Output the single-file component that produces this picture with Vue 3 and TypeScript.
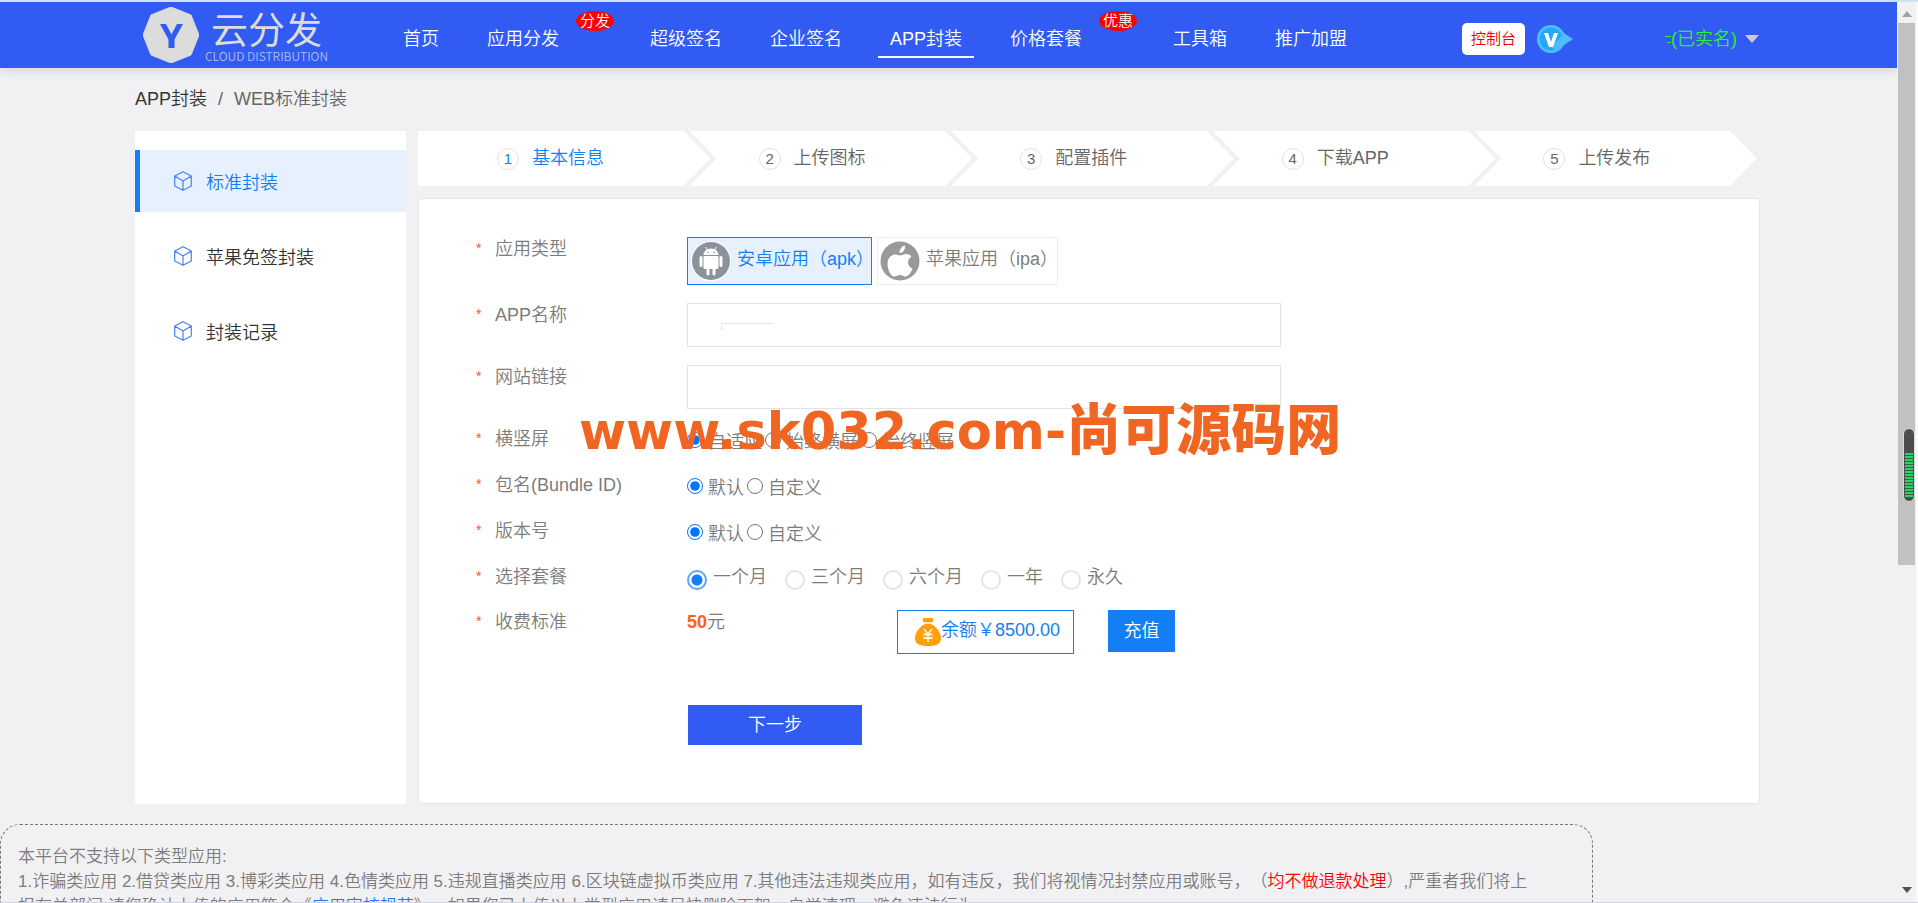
<script setup lang="ts">
import { ref } from 'vue'

interface NavItem { label: string; badge?: string; active?: boolean }
interface RadioRow { name: string; label: string; options: string[] }

const navItems: NavItem[] = [
  { label: '首页' },
  { label: '应用分发', badge: '分发' },
  { label: '超级签名' },
  { label: '企业签名' },
  { label: 'APP封装', active: true },
  { label: '价格套餐', badge: '优惠' },
  { label: '工具箱' },
  { label: '推广加盟' },
]
const sideItems = ['标准封装', '苹果免签封装', '封装记录']
const steps = ['基本信息', '上传图标', '配置插件', '下载APP', '上传发布']
const radioRows: RadioRow[] = [
  { name: 'orientation', label: '横竖屏', options: ['自适应', '始终横屏', '始终竖屏'] },
  { name: 'bundle', label: '包名(Bundle ID)', options: ['默认', '自定义'] },
  { name: 'version', label: '版本号', options: ['默认', '自定义'] },
]
const plans = ['一个月', '三个月', '六个月', '一年', '永久']

const platform = ref('apk')
const appName = ref('')
const siteUrl = ref('')
const picked = ref<Record<string, string>>({ orientation: '自适应', bundle: '默认', version: '默认' })
const plan = ref('一个月')
</script>

<template>
  <div class="window">
    <div class="page">
      <header class="header">
        <a class="logo" href="#" aria-label="云分发">
          <svg class="logo-mark" viewBox="0 0 56 56" aria-hidden="true">
            <path d="M28 0 48 8 56 28 48 48 28 56 8 48 0 28 8 8Z" fill="#dcdcdc" stroke="#dcdcdc" stroke-linejoin="round" />
            <path d="M17 17h6l5.500 10.500L34 17h6l-8.500 15.500V41h-6v-8.500Z" fill="#315bf3" />
          </svg>
          <span class="logo-text">
            <b>云分发</b>
            <small>CLOUD DISTRIBUTION</small>
          </span>
        </a>
        <nav class="nav">
          <div v-for="item in navItems" :key="item.label" class="nav-item">
            <a href="#" :class="{ active: item.active }">{{ item.label }}</a>
            <span v-if="item.badge" class="badge">{{ item.badge }}</span>
          </div>
        </nav>
        <div class="account">
          <button class="console" type="button">控制台</button>
          <svg class="vip" viewBox="0 0 36 28" aria-hidden="true">
            <path d="M24 6 36 14 24 22Z" fill="#4dbdff" />
            <circle cx="14" cy="14" r="14" fill="#56bdfc" />
            <circle cx="14" cy="14" r="11.500" fill="#20aaff" />
            <path d="M14 22 27 9v10l-7 7Z" fill="#4dbdff" />
            <path d="M7 8h4l3 9 3-9h4l-5 14h-4Z" fill="#fff" />
          </svg>
          <a class="user" href="#">
            <svg class="dashes" viewBox="0 0 8 18" aria-hidden="true">
              <path d="M2 6.500h6M4 12.500h4" stroke="#2cf03a" />
            </svg>
            <span>(已实名)</span>
            <svg class="caret" viewBox="0 0 14 8" aria-hidden="true"><path d="M0 0h14L7 8Z" fill="#c9ccd6" /></svg>
          </a>
        </div>
      </header>

      <nav class="crumbs" aria-label="breadcrumb">
        <a href="#">APP封装</a><span>/</span><span>WEB标准封装</span>
      </nav>

      <div class="columns">
        <aside class="sidebar">
          <a v-for="(item, i) in sideItems" :key="item" href="#" class="side-item" :class="{ active: i === 0 }">
            <svg viewBox="0 0 18 20" aria-hidden="true">
              <path d="M9 .7 17.300 5v10L9 19.300.7 15V5ZM.7 5 9 10l8.300-5M9 10v9.300" fill="none" stroke="#4a80f5" stroke-width="1.200" stroke-linejoin="round" />
            </svg>
            <span>{{ item }}</span>
          </a>
        </aside>

        <main class="main">
          <ol class="steps">
            <li v-for="(step, i) in steps" :key="step" class="step" :class="{ current: i === 0 }">
              <i>{{ i + 1 }}</i><span>{{ step }}</span>
            </li>
          </ol>

          <form class="form" @submit.prevent>
            <div class="row">
              <span class="label">应用类型</span>
              <div class="platforms">
                <button type="button" class="platform" :class="{ on: platform === 'apk' }" @click="platform = 'apk'">
                  <svg viewBox="0 0 40 40" aria-hidden="true">
                    <circle cx="20" cy="20" r="20" fill="#fff" />
                    <circle cx="20" cy="20" r="19" fill="#8b929b" />
                    <path d="M12.500 14a7.500 6.500 0 0 1 15 0Z" fill="#fff" />
                    <path d="m14.500 6 2 3m9-3-2 3" stroke="#fff" />
                    <path d="M12.500 15h15v11.500a1.500 1.500 0 0 1-1.500 1.500H14a1.500 1.500 0 0 1-1.500-1.500Z" fill="#fff" />
                    <path d="M10 16.500v8M30 16.500v8M17 27v6M23 27v6" stroke="#fff" stroke-width="3" stroke-linecap="round" />
                    <circle cx="17" cy="11.500" r=".8" fill="#8b929b" /><circle cx="23" cy="11.500" r=".8" fill="#8b929b" />
                  </svg>
                  <span>安卓应用（apk）</span>
                </button>
                <button type="button" class="platform ipa" :class="{ on: platform === 'ipa' }" @click="platform = 'ipa'">
                  <svg viewBox="0 0 40 40" aria-hidden="true">
                    <circle cx="20" cy="20" r="19.500" fill="#999" />
                    <path d="M20 14.500c2 0 3.500-1.500 6.500-1.500 2 0 4 1 5 2.500-5 3.500-4.500 9.500 1 12-1.500 4-4 8-7 8-2.500 0-3-1.500-5.500-1.500s-3.500 1.500-6 1.500C10.500 35.500 7.500 28 7.500 23c0-6 4-9.500 7.500-9.500 2.500 0 3.500 1 5 1Z" fill="#fff" />
                    <path d="M19.500 12c0-4 2.500-7 5.500-7.500.5 4-2 7.500-5.500 7.500Z" fill="#fff" />
                  </svg>
                  <span>苹果应用（ipa）</span>
                </button>
              </div>
            </div>

            <div class="row">
              <label class="label" for="app-name">APP名称</label>
              <div class="field">
                <input id="app-name" v-model="appName" type="text">
                <svg class="trace" viewBox="0 0 52 8" aria-hidden="true"><path d="M.5 7V.5H52" fill="none" stroke="#e2e2e2" /></svg>
              </div>
            </div>

            <div class="row">
              <label class="label" for="site-url">网站链接</label>
              <div class="field"><input id="site-url" v-model="siteUrl" type="text"></div>
            </div>

            <div v-for="row in radioRows" :key="row.name" class="row radio-row">
              <span class="label">{{ row.label }}</span>
              <div class="radios">
                <label v-for="option in row.options" :key="option">
                  <input v-model="picked[row.name]" type="radio" :name="row.name" :value="option"><span>{{ option }}</span>
                </label>
              </div>
            </div>

            <div class="row plan-row">
              <span class="label">选择套餐</span>
              <div class="plans">
                <label v-for="option in plans" :key="option">
                  <input v-model="plan" type="radio" name="plan" :value="option"><span>{{ option }}</span>
                </label>
              </div>
            </div>

            <div class="row">
              <span class="label">收费标准</span>
              <div class="billing">
                <span class="price"><b>50</b>元</span>
                <div class="balance">
                  <svg viewBox="0 0 26 28" aria-hidden="true">
                    <path d="M8 0h10v4l-2 2c6 3 10 9 10 14 0 6-4 8-13 8S0 26 0 20C0 15 4 9 10 6L8 4Z" fill="#ffa008" />
                    <path d="M7 5h12" stroke="#fff" stroke-width="1.500" />
                    <path d="m9 11 4 5 4-5M13 16v8M8.500 16.500h9M8.500 20h9" fill="none" stroke="#fff0dc" stroke-width="1.800" />
                  </svg>
                  <span>余额￥8500.00</span>
                </div>
                <button class="recharge" type="button">充值</button>
              </div>
            </div>

            <button class="next" type="submit">下一步</button>
            <div class="watermark"><span>www.sk032.com-</span><b>尚可源码网</b></div>
          </form>
        </main>
      </div>

      <section class="notice">
        <p>本平台不支持以下类型应用:</p>
        <p>
          1.诈骗类应用 2.借贷类应用 3.博彩类应用 4.色情类应用 5.违规直播类应用 6.区块链虚拟币类应用 7.其他违法违规类应用，如有违反，我们将视情况封禁应用或账号，（<em>均不做退款处理</em>）,严重者我们将上<br>报有关部门,请您确认上传的应用符合《<a href="#">应用审核规范</a>》，如果您已上传以上类型应用请尽快删除下架，自觉清理，避免违法行为
        </p>
      </section>
    </div>

    <div class="scrollbar" aria-hidden="true">
      <svg class="arrow" viewBox="0 0 10 6"><path d="M0 6 5 0l5 6Z" fill="#a3a3a3" /></svg>
      <div class="thumb">
        <div class="meter"><div class="level"></div></div>
      </div>
      <svg class="arrow down" viewBox="0 0 10 6"><path d="M0 0h10L5 6Z" fill="#505050" /></svg>
    </div>
  </div>
</template>

<style>
body { margin: 0; overflow: hidden; }
</style>

<style scoped>
* { box-sizing: border-box; }
.window {
  display: grid;
  grid-template-columns: minmax(0, 1fr) 21px;
  height: 100vh;
  overflow: hidden;
  border-top: 2px solid #cbe3f8;
  border-bottom: 1px solid #d5d3e4;
  background: #f1f1f3;
  color: #7c7c7c;
  font: 350 18px/24px "Liberation Sans", "Noto Sans CJK SC", sans-serif;
  text-spacing-trim: space-all;
}
a { color: inherit; text-decoration: none; }
button, input { margin: 0; font: inherit; color: inherit; }
svg { display: block; flex: none; }
.page { min-height: 0; overflow: hidden; }

.header {
  display: flex;
  align-items: center;
  height: 66px;
  padding: 0 138px 0 143px;
  background: #315bf3;
  color: #fff;
  box-shadow: 0 2px 10px rgba(0, 0, 0, .12);
}
.logo { display: flex; align-items: center; gap: 6px; width: 236px; color: #dcdcdc; }
.logo-mark { width: 56px; height: 56px; }
.logo-text { display: flex; flex-direction: column; align-items: center; font-family: "Noto Sans CJK SC", sans-serif; }
.logo-text b { font-size: 37px; line-height: 42px; font-weight: 400; }
.logo-text small { font-size: 12px; line-height: 14px; color: #adbaf0; white-space: nowrap; }
.nav { display: flex; gap: 24px; padding: 8px 0 0 12px; white-space: nowrap; }
.nav-item { display: flex; }
.nav-item a { padding: 7px 12px 5px; border-bottom: 2px solid transparent; }
.nav-item a.active { border-color: #fff; }
.badge {
  width: 38px;
  height: 20px;
  margin: -9px 0 0 5px;
  border-radius: 50%;
  background: #f00;
  font-size: 15px;
  line-height: 20px;
  text-align: center;
}
.account { display: flex; align-items: center; margin-left: auto; padding-top: 8px; white-space: nowrap; }
.console {
  width: 63px;
  height: 32px;
  padding: 0;
  border: 0;
  border-radius: 5px;
  background: #fff;
  color: #e60000;
  font-size: 15px;
}
.vip { width: 36px; height: 28px; margin: 0 90px 0 12px; }
.user { display: flex; align-items: center; color: #2cf03a; }
.dashes { width: 8px; height: 18px; }
.caret { width: 14px; height: 8px; margin-left: 8px; }

.crumbs { display: flex; gap: 11px; padding: 19px 135px 20px; }
.crumbs a { color: #333; }
.crumbs span { color: #666; }

.columns { display: grid; grid-template-columns: 271px minmax(0, 1fr); gap: 12px; padding: 0 137px 0 135px; }
.sidebar { display: flex; flex-direction: column; gap: 13px; padding: 19px 0; background: #fff; color: #333; }
.side-item {
  display: flex;
  align-items: center;
  gap: 14px;
  height: 62px;
  padding-left: 34px;
  border-left: 5px solid transparent;
}
.side-item svg { width: 18px; height: 20px; }
.side-item span { padding-top: 4px; }
.side-item.active { border-color: #147ef5; background: #e7f1fd; color: #147ef5; }

.steps { display: flex; margin: 0 3px 12px 0; padding: 0; list-style: none; }
.step {
  display: flex;
  align-items: center;
  gap: 13px;
  flex: 1 1 0;
  height: 55px;
  margin-left: -21px;
  padding-left: 69px;
  background: #fff;
  color: #666;
  clip-path: polygon(0 0, calc(100% - 27px) 0, 100% 50%, calc(100% - 27px) 100%, 0 100%, 27px 50%);
}
.step:first-child {
  flex-basis: 10px;
  margin-left: 0;
  padding-left: 79px;
  clip-path: polygon(0 0, calc(100% - 27px) 0, 100% 50%, calc(100% - 27px) 100%, 0 100%);
}
.step i {
  width: 22px;
  height: 22px;
  border: 1px solid #e2e2e2;
  border-radius: 50%;
  font-size: 15px;
  font-style: normal;
  line-height: 20px;
  text-align: center;
}
.step span { padding-bottom: 1px; }
.step.current { color: #147ef5; }

.form {
  position: relative;
  display: flex;
  flex-direction: column;
  gap: 18px;
  padding: 38px 54px 58px 57px;
  border: 1px solid #e4e5e8;
  border-radius: 4px;
  background: #fff;
}
.row { display: grid; grid-template-columns: 211px minmax(0, 1fr); }
.label { display: flex; height: 24px; }
.label::before { content: "*"; width: 19px; color: #ff4b3a; font-size: 14px; line-height: 22px; }
.platforms { display: flex; gap: 5px; }
.platform {
  display: flex;
  align-items: center;
  gap: 6px;
  width: 185px;
  height: 48px;
  padding: 0 0 0 3px;
  border: 1px solid #e7f1fd;
  background: #fff;
  white-space: nowrap;
}
.platform.ipa { width: 181px; padding-left: 2px; }
.platform.on { border-color: #147ef5; background: #e7f1fd; color: #147ef5; }
.platform svg { width: 40px; height: 40px; }
.platform span { padding-bottom: 4px; }
.field { position: relative; max-width: 594px; }
.field input { display: block; width: 100%; height: 44px; padding: 0 12px; border: 1px solid #e2e2e2; background: #fff; outline: 0; }
.trace { position: absolute; left: 34px; top: 20px; width: 52px; height: 8px; }

.radio-row { height: 28px; }
.radios { display: flex; gap: 3px; }
.radios label { display: flex; align-items: flex-start; gap: 5px; }
.radios input { width: 16px; height: 16px; margin-top: 5px; }
.radios span { padding-top: 3px; }
.plan-row { height: 27px; }
.plans { display: flex; gap: 18px; }
.plans label { display: flex; gap: 6px; }
.plans input {
  appearance: none;
  width: 20px;
  height: 20px;
  margin-top: 5px;
  border: 2px solid #e4e4e4;
  border-radius: 50%;
  background: #fff;
}
.plans input:checked { border-color: #5ba4f5; background: radial-gradient(circle, #147ef5 5px, #fff 6px); }
.billing { display: flex; align-items: flex-start; }
.price { width: 210px; }
.price b { color: #ff5f1a; font-weight: 700; }
.balance {
  display: flex;
  align-items: center;
  justify-content: center;
  width: 177px;
  height: 44px;
  margin-right: 34px;
  padding-left: 4px;
  border: 1px solid #147ef5;
  color: #147ef5;
  white-space: nowrap;
}
.balance svg { width: 26px; height: 28px; }
.balance span { padding-bottom: 4px; }
.recharge { width: 67px; height: 42px; padding: 0; border: 0; background: #147ef5; color: #fff; }
.next { width: 174px; height: 40px; margin: 33px 0 0 212px; padding: 0; border: 0; background: #315bf3; color: #fff; }
.watermark {
  position: absolute;
  left: 160px;
  top: 192px;
  color: #f16522;
  font: 700 51px/68px "DejaVu Sans", sans-serif;
  white-space: nowrap;
  pointer-events: none;
}
.watermark b { font: 900 55px/68px "Noto Sans CJK SC", sans-serif; }

.notice {
  width: 84%;
  margin-top: 20px;
  padding: 19px 17px;
  border: 1px dashed #777;
  border-radius: 20px;
  font-size: 17px;
  line-height: 25px;
}
.notice p { margin: 0; }
.notice em { color: #f00; font-style: normal; }
.notice a { color: #147ef5; }

.scrollbar {
  display: flex;
  flex-direction: column;
  align-items: center;
  padding: 9px 2px 9px;
  border-right: 2px solid #fafafa;
  background: #f1f1f1;
}
.arrow { width: 10px; height: 6px; }
.arrow.down { margin-top: auto; }
.thumb { display: flex; justify-content: flex-end; align-items: flex-start; width: 17px; height: 542px; margin-top: 6px; background: #c1c1c1; }
.meter {
  display: flex;
  align-items: flex-end;
  width: 12px;
  height: 74px;
  margin-top: 405px;
  padding: 4px 1px;
  border: 1px solid #ddd;
  border-radius: 6px;
  background: #4c4c4c;
}
.level { width: 100%; height: 44px; background: repeating-linear-gradient(#26d366 0 2px, #3d5c46 2px 3px); }
</style>
